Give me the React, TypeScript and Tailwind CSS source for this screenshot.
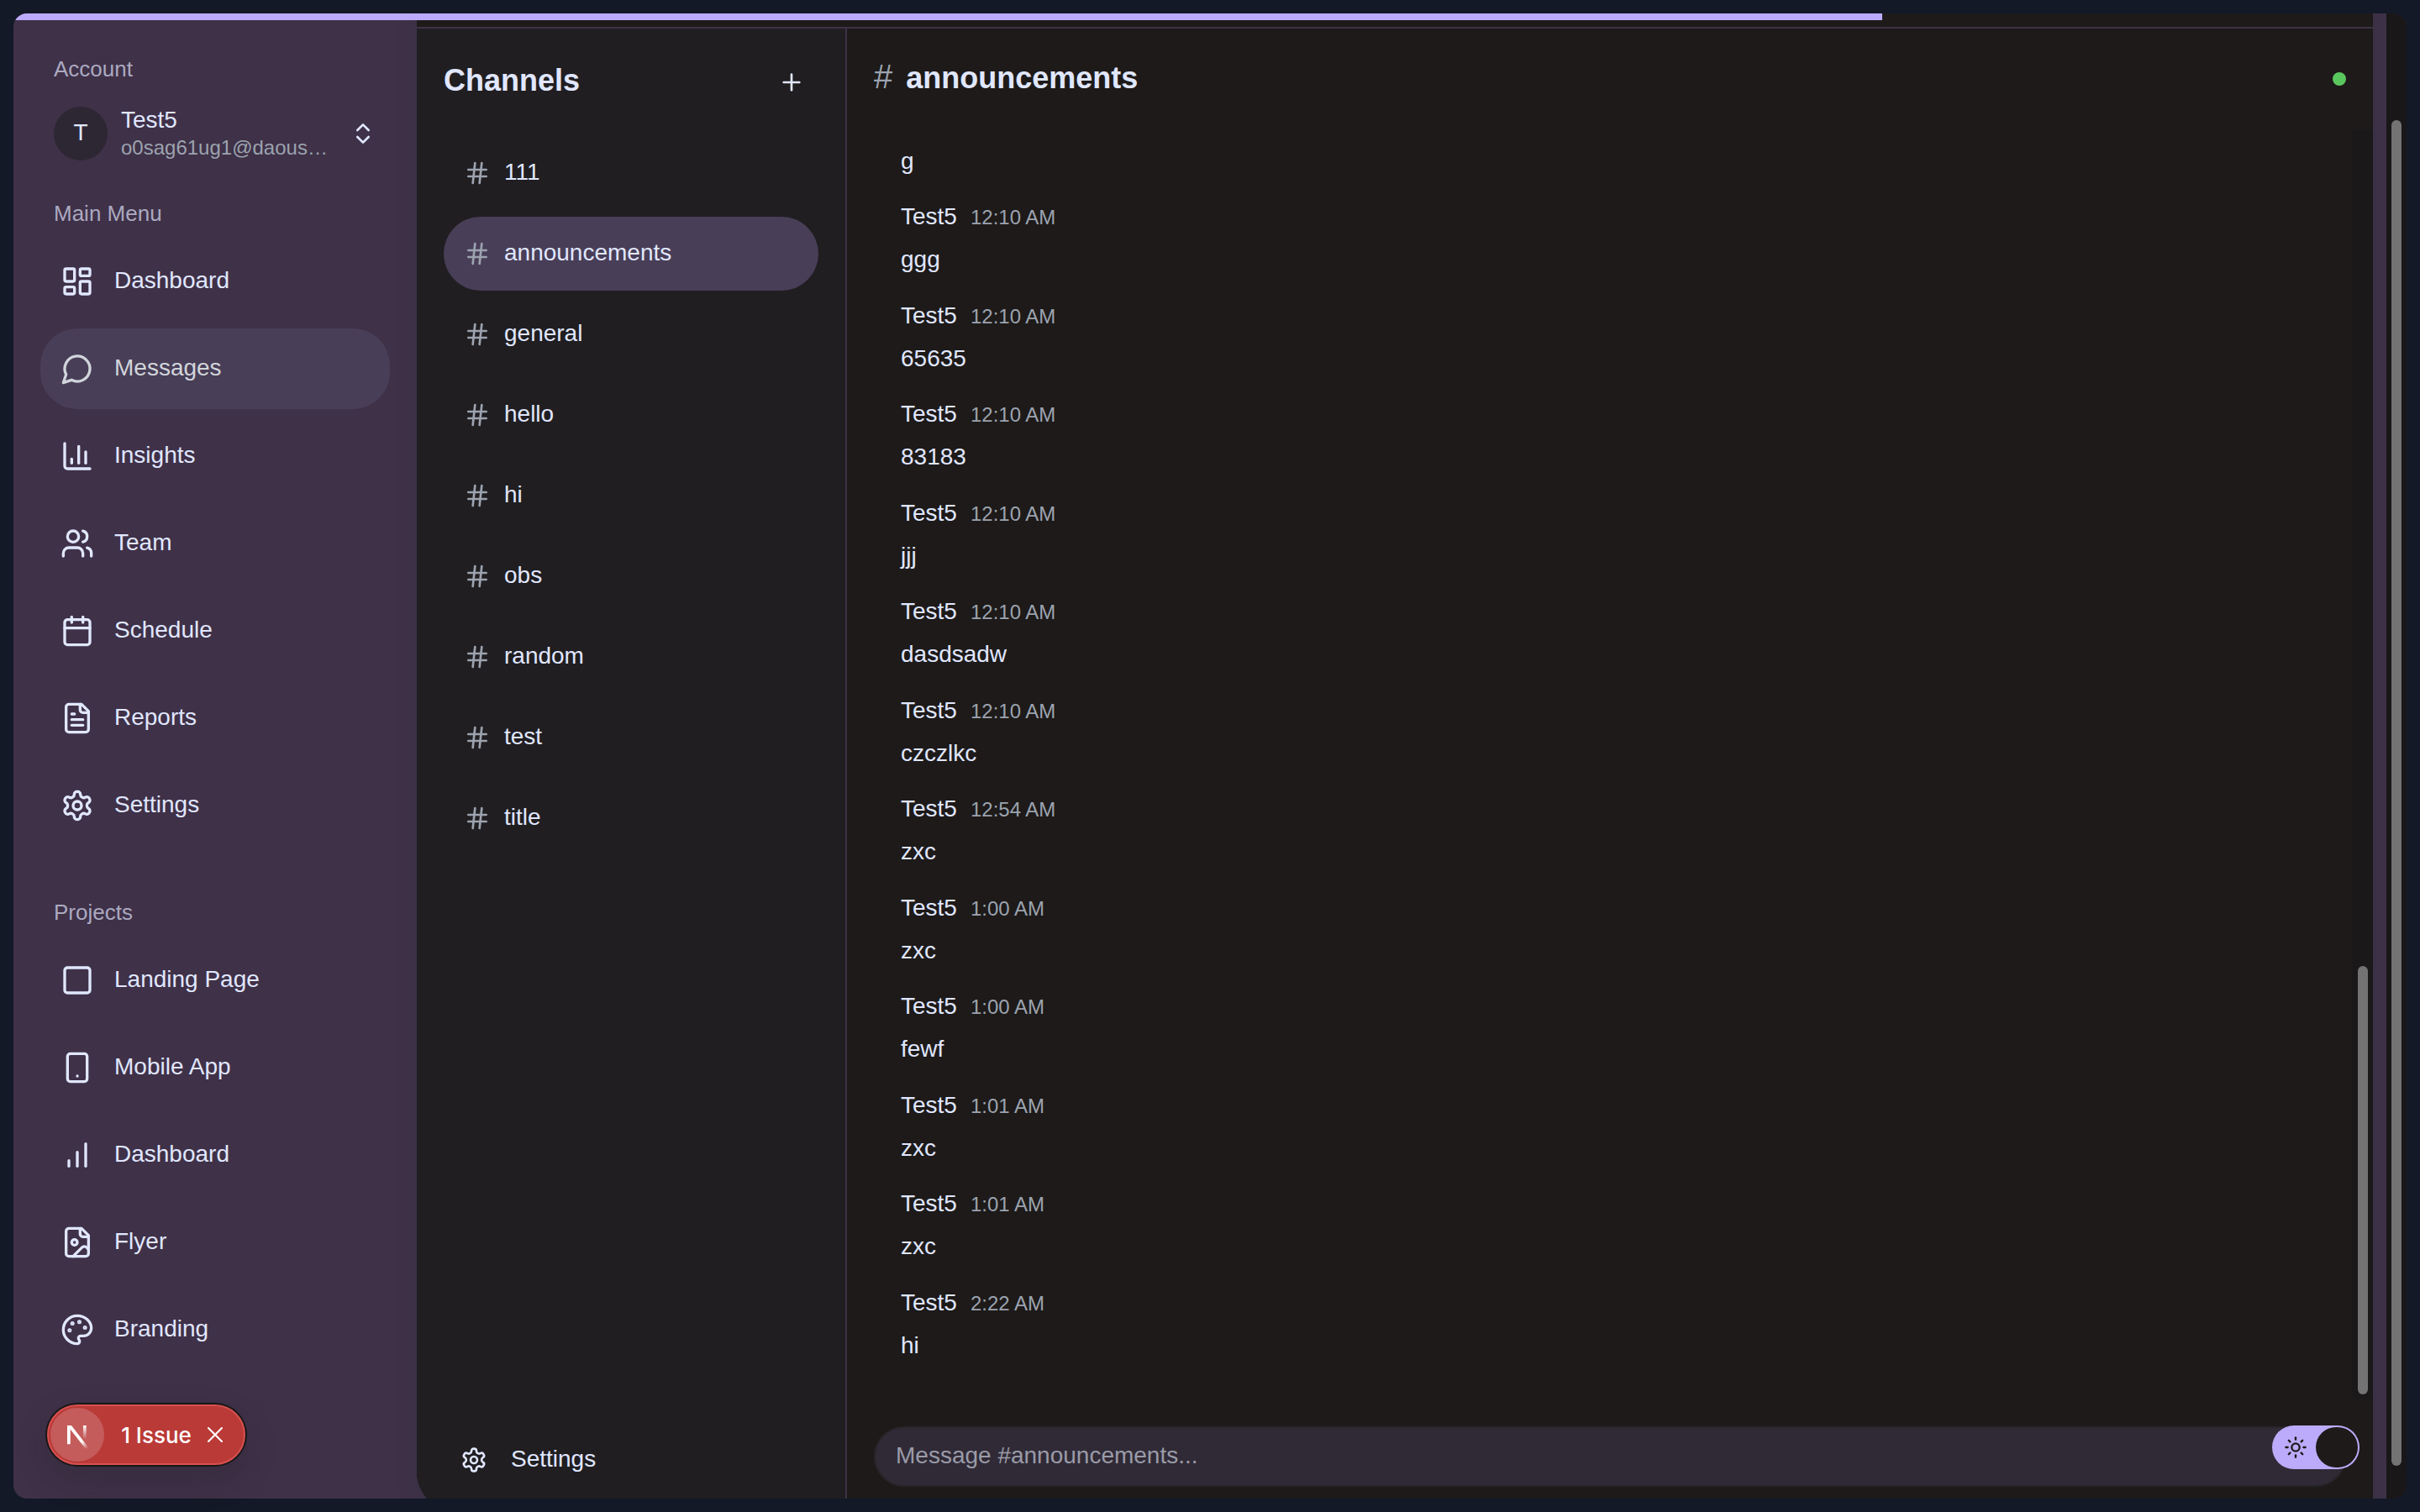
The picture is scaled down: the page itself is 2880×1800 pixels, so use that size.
import React from "react";
import {
  Calendar,
  ChartColumn,
  ChevronsUpDown,
  Hash,
  LayoutDashboard,
  Plus,
  Smartphone,
  Square,
  Sun,
  Users,
  X,
} from "lucide-react";

type IconProps = { size?: number; className?: string };
type IconComponent = React.ComponentType<IconProps>;
type NavEntry = { label: string; icon: IconComponent; active?: boolean };

function outlineIcon(shapes: React.ReactNode): IconComponent {
  return function OutlineIcon({ size = 24, className }: IconProps) {
    return (
      <svg
        width={size}
        height={size}
        viewBox="0 0 24 24"
        fill="none"
        stroke="currentColor"
        strokeWidth="2"
        strokeLinecap="round"
        strokeLinejoin="round"
        className={className}
        aria-hidden="true"
      >
        {shapes}
      </svg>
    );
  };
}

const Bubble = outlineIcon(<path d="M7.9 20A9 9 0 1 0 4 16.1L2 22Z" />);

const Bars = outlineIcon(
  <>
    <path d="M12 20V10" />
    <path d="M18 20V4" />
    <path d="M6 20v-4" />
  </>,
);

const Gear = outlineIcon(
  <>
    <path d="M12.22 2h-.44a2 2 0 0 0-2 2v.18a2 2 0 0 1-1 1.73l-.43.25a2 2 0 0 1-2 0l-.15-.08a2 2 0 0 0-2.73.73l-.22.38a2 2 0 0 0 .73 2.73l.15.1a2 2 0 0 1 1 1.72v.51a2 2 0 0 1-1 1.74l-.15.09a2 2 0 0 0-.73 2.73l.22.38a2 2 0 0 0 2.73.73l.15-.08a2 2 0 0 1 2 0l.43.25a2 2 0 0 1 1 1.73V20a2 2 0 0 0 2 2h.44a2 2 0 0 0 2-2v-.18a2 2 0 0 1 1-1.73l.43-.25a2 2 0 0 1 2 0l.15.08a2 2 0 0 0 2.73-.73l.22-.39a2 2 0 0 0-.73-2.73l-.15-.08a2 2 0 0 1-1-1.74v-.5a2 2 0 0 1 1-1.74l.15-.09a2 2 0 0 0 .73-2.73l-.22-.38a2 2 0 0 0-2.73-.73l-.15.08a2 2 0 0 1-2 0l-.43-.25a2 2 0 0 1-1-1.73V4a2 2 0 0 0-2-2z" />
    <circle cx="12" cy="12" r="3" />
  </>,
);

const Document = outlineIcon(
  <>
    <path d="M15 2H6a2 2 0 0 0-2 2v16a2 2 0 0 0 2 2h12a2 2 0 0 0 2-2V7Z" />
    <path d="M14 2v4a2 2 0 0 0 2 2h4" />
    <path d="M10 9H8" />
    <path d="M16 13H8" />
    <path d="M16 17H8" />
  </>,
);

const Picture = outlineIcon(
  <>
    <path d="M15 2H6a2 2 0 0 0-2 2v16a2 2 0 0 0 2 2h12a2 2 0 0 0 2-2V7Z" />
    <path d="M14 2v4a2 2 0 0 0 2 2h4" />
    <circle cx="10" cy="12" r="2" />
    <path d="m20 17-1.296-1.296a2.41 2.41 0 0 0-3.408 0L9 22" />
  </>,
);

const PaintPalette = outlineIcon(
  <>
    <circle cx="13.5" cy="6.5" r=".5" fill="currentColor" />
    <circle cx="17.5" cy="10.5" r=".5" fill="currentColor" />
    <circle cx="8.5" cy="7.5" r=".5" fill="currentColor" />
    <circle cx="6.5" cy="12.5" r=".5" fill="currentColor" />
    <path d="M12 2C6.5 2 2 6.5 2 12s4.5 10 10 10c.926 0 1.648-.746 1.648-1.688 0-.437-.18-.835-.437-1.125-.29-.289-.438-.652-.438-1.125a1.64 1.64 0 0 1 1.668-1.668h1.996c3.051 0 5.555-2.503 5.555-5.554C21.965 6.012 17.461 2 12 2z" />
  </>,
);

const mainMenu: NavEntry[] = [
  { label: "Dashboard", icon: LayoutDashboard },
  { label: "Messages", icon: Bubble, active: true },
  { label: "Insights", icon: ChartColumn },
  { label: "Team", icon: Users },
  { label: "Schedule", icon: Calendar },
  { label: "Reports", icon: Document },
  { label: "Settings", icon: Gear },
];

const projects: NavEntry[] = [
  { label: "Landing Page", icon: Square },
  { label: "Mobile App", icon: Smartphone },
  { label: "Dashboard", icon: Bars },
  { label: "Flyer", icon: Picture },
  { label: "Branding", icon: PaintPalette },
];

const channels = ["111", "announcements", "general", "hello", "hi", "obs", "random", "test", "title"];
const currentChannel = "announcements";

type Message = { author?: string; time?: string; body: string };

const messages: Message[] = [
  { body: "g" },
  { author: "Test5", time: "12:10 AM", body: "ggg" },
  { author: "Test5", time: "12:10 AM", body: "65635" },
  { author: "Test5", time: "12:10 AM", body: "83183" },
  { author: "Test5", time: "12:10 AM", body: "jjj" },
  { author: "Test5", time: "12:10 AM", body: "dasdsadw" },
  { author: "Test5", time: "12:10 AM", body: "czczlkc" },
  { author: "Test5", time: "12:54 AM", body: "zxc" },
  { author: "Test5", time: "1:00 AM", body: "zxc" },
  { author: "Test5", time: "1:00 AM", body: "fewf" },
  { author: "Test5", time: "1:01 AM", body: "zxc" },
  { author: "Test5", time: "1:01 AM", body: "zxc" },
  { author: "Test5", time: "2:22 AM", body: "hi" },
];

function NavSection({ title, entries }: { title: string; entries: NavEntry[] }) {
  return (
    <section>
      <h2 className="px-4 text-[26px] leading-[40px] text-[#aba9c0]">{title}</h2>
      <ul className="mt-[13px] flex flex-col gap-2">
        {entries.map(({ label, icon: Icon, active }) => (
          <li key={label}>
            <a
              href="#"
              className={
                active
                  ? "flex h-24 items-center gap-6 rounded-[44px] bg-[#483e57] px-6 text-[#d1d5db]"
                  : "flex h-24 items-center gap-6 rounded-[44px] px-6 text-[#e0e7ff]"
              }
            >
              <Icon size={40} className="shrink-0" />
              <span className="pb-0.5">{label}</span>
            </a>
          </li>
        ))}
      </ul>
    </section>
  );
}

function Sidebar() {
  return (
    <aside className="w-[480px] shrink-0 px-8 pt-[46px]">
      <h2 className="px-4 text-[26px] leading-[40px] text-[#aba9c0]">Account</h2>
      <button type="button" className="mt-[25px] flex h-16 w-full items-center px-4 text-left">
        <span className="flex size-16 shrink-0 items-center justify-center rounded-full bg-[#2d2733] pb-0.5">T</span>
        <span className="ml-4 w-[248px] shrink-0">
          <span className="block leading-[34px]">Test5</span>
          <span className="block truncate text-[24px] leading-[32px] text-[#9ca3af]">o0sag61ug1@daouse.com</span>
        </span>
        <ChevronsUpDown size={32} className="ml-auto shrink-0" />
      </button>
      <nav className="mt-[43px] flex flex-col gap-[59px]">
        <NavSection title="Main Menu" entries={mainMenu} />
        <NavSection title="Projects" entries={projects} />
      </nav>
    </aside>
  );
}

function ChannelList() {
  return (
    <section className="flex w-[512px] shrink-0 flex-col border-r-2 border-[#3e3147] bg-[#201e21] px-8 pt-8 pb-8">
      <header className="flex h-16 items-center justify-between">
        <h1 className="pb-1 text-[36px] leading-[44px] font-bold">Channels</h1>
        <button type="button" aria-label="Add channel" className="flex size-16 items-center justify-center">
          <Plus size={32} />
        </button>
      </header>
      <ul className="mt-8 flex flex-1 flex-col gap-2">
        {channels.map((name) => (
          <li key={name}>
            <a
              href="#"
              className={
                name === currentChannel
                  ? "flex h-[88px] items-center gap-4 rounded-[44px] bg-[#483e57] px-6"
                  : "flex h-[88px] items-center gap-4 rounded-[44px] px-6"
              }
            >
              <Hash size={32} className="shrink-0 text-[#9ca3af]" />
              <span className="pb-0.5">{name}</span>
            </a>
          </li>
        ))}
      </ul>
      <button type="button" className="flex h-[60px] shrink-0 items-center gap-7 px-5 text-left">
        <Gear size={32} />
        <span className="pb-0.5">Settings</span>
      </button>
    </section>
  );
}

function Chat() {
  return (
    <section className="flex min-w-0 flex-1 flex-col">
      <header className="flex h-[120px] shrink-0 items-center justify-between px-8">
        <div className="flex items-baseline gap-4 pb-1">
          <span className="text-[40px] leading-[44px] text-[#9ca3af]">#</span>
          <h2 className="text-[36px] leading-[44px] font-bold">{currentChannel}</h2>
        </div>
        <span className="size-4 rounded-full bg-[#5ac75e]" aria-label="Online" />
      </header>
      <div className="flex min-h-0 flex-1">
        <ol className="flex min-w-0 flex-1 flex-col justify-end gap-6 overflow-hidden px-16 pb-[42px]">
          {messages.map((message, index) => (
            <li key={index} className="shrink-0">
              {message.author && (
                <div className="mb-2 flex h-10 items-baseline gap-4 leading-[40px]">
                  <span>{message.author}</span>
                  <time className="text-[24px] leading-[32px] text-[#9ca3af]">{message.time}</time>
                </div>
              )}
              <p className="leading-relaxed">{message.body}</p>
            </li>
          ))}
        </ol>
        <div className="flex w-6 shrink-0 flex-col justify-end bg-[#1a1819] p-1.5">
          <div className="h-[34%] rounded-full bg-[#737373]" />
        </div>
      </div>
      <form className="shrink-0 px-8 pt-8 pb-[30px]" onSubmit={(event) => event.preventDefault()}>
        <input
          type="text"
          aria-label="Message"
          placeholder="Message #announcements..."
          className="block h-[72px] w-full rounded-full border-2 border-[#262629] bg-[#302a36] px-6 pb-0.5 outline-none placeholder:text-[#9a9ba8]"
        />
      </form>
    </section>
  );
}

function NextLogo() {
  return (
    <svg width="32" height="36" viewBox="-0.6 -2 16 18" fill="none" aria-hidden="true">
      <defs>
        <linearGradient id="diagonal" x1="9.96" y1="11.12" x2="15.48" y2="17.97" gradientUnits="userSpaceOnUse">
          <stop stopColor="white" />
          <stop offset="0.604" stopColor="white" stopOpacity="0" />
        </linearGradient>
        <linearGradient id="stem" x1="11.82" y1="1.4" x2="11.79" y2="9.63" gradientUnits="userSpaceOnUse">
          <stop stopColor="white" />
          <stop offset="1" stopColor="white" stopOpacity="0" />
        </linearGradient>
        <clipPath id="frame">
          <rect x="0" y="1.5" width="16" height="15" />
        </clipPath>
      </defs>
      <g clipPath="url(#frame)">
        <path d="M13.3 15.2 L2.34 1 V12.6" stroke="url(#diagonal)" strokeWidth="1.86" />
        <path d="M11.825 1.5 V13.1" stroke="url(#stem)" strokeWidth="1.86" />
      </g>
    </svg>
  );
}

function IssueBadge() {
  return (
    <div className="absolute bottom-14 left-14 flex h-[72px] w-[236px] items-center justify-between rounded-full border-2 border-[#d75150] bg-[#ba3a37] pr-[18px] pl-0.5 text-white shadow-[0_0_0_2px_#171717,0_16px_40px_rgba(23,23,23,0.2)]">
      <span className="flex size-16 shrink-0 items-center justify-center rounded-full bg-[#c45c5b]">
        <NextLogo />
      </span>
      <button type="button" className="ml-2 pt-0.5 font-[Inter,sans-serif] text-[26px] font-medium">
        1 Issue
      </button>
      <button type="button" aria-label="Dismiss">
        <X size={32} strokeWidth={1.5} />
      </button>
    </div>
  );
}

function ThemeSwitch() {
  return (
    <button
      type="button"
      role="switch"
      aria-checked="true"
      aria-label="Dark theme"
      className="absolute right-[72px] bottom-[51px] flex h-[52px] w-[104px] items-center justify-between rounded-full bg-[#bcabfa] pr-0.5 pl-3.5 text-[#1d1a19]"
    >
      <Sun size={28} />
      <span className="h-12 w-[50px] rounded-full bg-[#1d1a19]" />
    </button>
  );
}

export default function App() {
  return (
    <div className="relative h-screen overflow-hidden bg-[#131927] p-4 font-['Liberation_Sans',Arial,sans-serif] text-[28px] leading-[40px] text-[#e0e7ff]">
      <div className="relative flex h-full overflow-hidden rounded-2xl bg-[#3f3148]">
        <Sidebar />
        <main className="-mb-4 flex min-w-0 flex-1 flex-col overflow-hidden rounded-bl-[48px] bg-[#1d1a19] pt-4 shadow-[0_0_24px_rgba(40,50,60,0.3)]">
          <div className="flex min-h-0 flex-1 border-t-2 border-[#3e3147]">
            <ChannelList />
            <Chat />
          </div>
        </main>
        <div className="w-4 shrink-0" />
        <div className="flex w-6 shrink-0 bg-[#191718] px-1.5 pt-[127px] pb-[39px]">
          <div className="flex-1 rounded-full bg-[#737373]" />
        </div>
        <div className="absolute top-0 left-0 h-2 w-[78.1%] bg-[#bcabfa]" />
      </div>
      <IssueBadge />
      <ThemeSwitch />
    </div>
  );
}
